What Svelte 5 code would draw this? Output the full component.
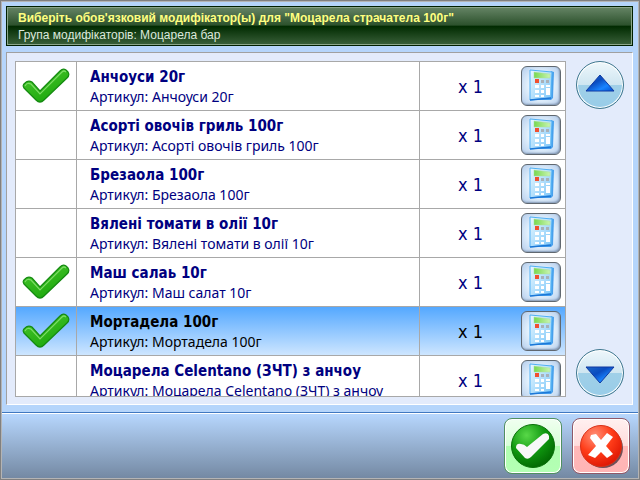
<script>
  let items = $state([
    { name: 'Анчоуси 20г', article: 'Анчоуси 20г', count: 1, checked: true },
    { name: 'Асорті овочів гриль 100г', article: 'Асорті овочів гриль 100г', count: 1, checked: false },
    { name: 'Брезаола 100г', article: 'Брезаола 100г', count: 1, checked: false },
    { name: 'Вялені томати в олії 10г', article: 'Вялені томати в олії 10г', count: 1, checked: false },
    { name: 'Маш салаь 10г', article: 'Маш салат 10г', count: 1, checked: true },
    { name: 'Мортадела 100г', article: 'Мортадела 100г', count: 1, checked: true },
    { name: 'Моцарела Celentano (ЗЧТ) з анчоу', article: 'Моцарела Celentano (ЗЧТ) з анчоу', count: 1, checked: false }
  ]);
  let selected = $state(5);
  let list;

  function pick(i) {
    selected = i;
    items[i].checked = !items[i].checked;
  }

  function scroll(rows) {
    list.scrollBy({ top: rows * 49 });
  }
</script>

<svg class="defs" aria-hidden="true">
  <defs>
    <linearGradient id="tick" x1="0" y1="0" x2="0.6" y2="1">
      <stop offset="0" stop-color="#4cc830" />
      <stop offset="1" stop-color="#1ca80c" />
    </linearGradient>
    <linearGradient id="arrow" x1="0" y1="0" x2="1" y2="1">
      <stop offset="0" stop-color="#1c68c8" />
      <stop offset="0.4" stop-color="#0a4cc0" />
      <stop offset="0.7" stop-color="#1884ff" />
      <stop offset="1" stop-color="#0050d0" />
    </linearGradient>
    <linearGradient id="calc" x1="0" y1="0" x2="1" y2="1">
      <stop offset="0" stop-color="#eaf8ff" />
      <stop offset="0.5" stop-color="#b4e0fc" />
      <stop offset="1" stop-color="#78c4f8" />
    </linearGradient>
    <linearGradient id="lcd" x1="0" y1="0" x2="1" y2="0">
      <stop offset="0" stop-color="#78d850" />
      <stop offset="1" stop-color="#c8f4b0" />
    </linearGradient>
    <radialGradient id="green" cx="0.35" cy="0.25" r="0.85">
      <stop offset="0" stop-color="#58d848" />
      <stop offset="0.5" stop-color="#109810" />
      <stop offset="1" stop-color="#006000" />
    </radialGradient>
    <radialGradient id="red" cx="0.35" cy="0.25" r="0.85">
      <stop offset="0" stop-color="#ff9078" />
      <stop offset="0.5" stop-color="#ff3c18" />
      <stop offset="1" stop-color="#d81000" />
    </radialGradient>
  </defs>
</svg>

<main class="window">
  <header>
    <h1>Виберіть обов'язковий модифікатор(ы) для "Моцарела страчатела 100г"</h1>
    <p>Група модифікаторів: Моцарела бар</p>
  </header>

  <section class="panel">
    <div class="list" bind:this={list}>
      <table>
        <tbody>
          {#each items as item, i}
            <tr class:selected={i === selected} onclick={() => pick(i)}>
              <td class="mark">
                {#if item.checked}
                  <svg width="48" height="36" viewBox="0 0 48 36" role="img" aria-label="Вибрано">
                    <path d="M2 20 Q0 17 3 15 Q6 12 10 14 L18 23 L38 3 Q41 0 44 2 L46 4 Q48 7 45 10 L22 32 Q18 36 14 32 Z" fill="url(#tick)" stroke="#148a10" stroke-width="1.2" />
                    <path d="M3 18 Q5 14 9 16 L18 26 L40 4 Q42 2 44 4" fill="none" stroke="#7cdc64" stroke-width="1.2" />
                  </svg>
                {/if}
              </td>
              <td class="info">
                <div class="name">{item.name}</div>
                <div class="article">Артикул: {item.article}</div>
              </td>
              <td class="amount">
                <div class="amount-row">
                  <span>x {item.count}</span>
                  <button class="calc" aria-label="Кількість" onclick={(e) => e.stopPropagation()}>
                    <svg width="38" height="38" viewBox="0 0 38 38">
                      <path d="M9 33 L29 33 L31 31 L32 5 L29 4 Z" fill="#48a0ec" />
                      <path d="M8 3 L30 5 L29 31 L8 33 Z" fill="url(#calc)" stroke="#50b0f4" />
                      <path d="M8 33 L29 31" stroke="#1c78d8" stroke-width="1.5" />
                      <path d="M12 5 L28 7 V11 H12 Z" fill="url(#lcd)" stroke="#a8dca0" stroke-width="0.5" />
                      <path d="M13 12 h4 v4 h-4z" fill="#f05030" />
                      <path d="M19 13 h3 v3 h-3z M24 13 h3 v3 h-3z" fill="#a8b0b8" />
                      <path d="M13 18 h4 v3 h-4z M19 18 h3 v3 h-3z M24 18 h4 v2 h-4z M13 23 h4 v3 h-4z M19 23 h3 v3 h-3z M24 21 h4 v7 h-4z M13 28 h4 v2 h-4z M19 28 h3 v2 h-3z" fill="#fff" />
                    </svg>
                  </button>
                </div>
              </td>
            </tr>
          {/each}
        </tbody>
      </table>
    </div>

    <div class="scroller">
      <button class="round" aria-label="Вгору" onclick={() => scroll(-1)}>
        <svg width="30" height="22" viewBox="0 0 30 22">
          <path d="M15 1 L29 17 H1 Z" fill="url(#arrow)" stroke="#1038a0" stroke-linejoin="round" />
        </svg>
      </button>
      <button class="round" aria-label="Вниз" onclick={() => scroll(1)}>
        <svg width="30" height="22" viewBox="0 0 30 22">
          <path d="M15 21 L29 5 H1 Z" fill="url(#arrow)" stroke="#1038a0" stroke-linejoin="round" />
        </svg>
      </button>
    </div>
  </section>

  <footer>
    <button class="action ok" aria-label="Підтвердити">
      <svg width="48" height="48" viewBox="0 0 48 48">
        <circle cx="24" cy="24" r="21.5" fill="url(#green)" stroke="#087008" />
        <path d="M7 26 Q7 21 12 22 Q15 22 18 25 L34 12 Q39 10 40 14 V17 L22 35 Q19 38 16 36 Z" fill="#f8f8f8" />
      </svg>
    </button>
    <button class="action cancel" aria-label="Скасувати">
      <svg width="48" height="48" viewBox="0 0 48 48">
        <circle cx="26" cy="26" r="20" fill="#705058" />
        <circle cx="24" cy="24" r="20.5" fill="url(#red)" stroke="#d83018" />
        <path d="M14 13 L19 12 L24 18 L30 11 L36 15 L29 24 L36 32 L30 36 L24 30 L18 36 L11 33 L19 24 L13 16 Z" fill="#fff" />
      </svg>
    </button>
  </footer>
</main>

<style>
  :global(body) {
    margin: 0;
  }

  .defs {
    position: absolute;
    width: 0;
    height: 0;
  }

  .window {
    box-sizing: border-box;
    height: 100vh;
    display: flex;
    flex-direction: column;
    border: 1px solid #808080;
    outline: 1px solid #b4b4b4;
    outline-offset: -2px;
    background: #b5d5fb;
    font-family: Tahoma, "DejaVu Sans Condensed", "Noto Sans", sans-serif;
    color: #000080;
  }

  button {
    padding: 0;
    cursor: pointer;
    display: flex;
    align-items: center;
    justify-content: center;
  }

  header {
    margin: 5px 6px 6px 5px;
    padding: 3px 11px 1px;
    border: 1px solid #002000;
    box-shadow: inset 0 0 0 1px #8ba68b;
    background: linear-gradient(#668566, #2c512c 48%, #002a00 50%, #3a603a);
    font-family: "Liberation Sans", Arial, sans-serif;
    font-size: 12px;
    line-height: 17px;
  }

  h1 {
    margin: 0;
    font-size: 12px;
    color: #ffff80;
  }

  p {
    margin: 0;
    color: #dce8dc;
  }

  .panel {
    flex: 1;
    min-height: 0;
    display: flex;
    gap: 10px;
    margin: 0 6px 7px 5px;
    padding: 8px 8px 7px;
    border: 1px solid;
    border-color: #a0a0a0 #fff #fff #a0a0a0;
    background: #e3ebfb;
  }

  .list {
    flex: 1;
    overflow: hidden;
    border: 1px solid #a8a8a8;
    background: #fff;
  }

  table {
    width: 100%;
    border-spacing: 0;
    table-layout: fixed;
  }

  td {
    box-sizing: border-box;
    height: 49px;
    padding: 0;
    border-bottom: 1px solid #a8a8a8;
  }

  td + td {
    border-left: 1px solid #a8a8a8;
  }

  .selected {
    background: linear-gradient(#54a8ff, #d0e7ff);
    color: #000;
  }

  .mark {
    width: 60px;
    text-align: center;
  }

  .mark svg {
    display: block;
    margin: auto;
  }

  .info {
    padding: 2px 0 0 13px;
    white-space: nowrap;
    overflow: hidden;
  }

  .name {
    font-size: 15px;
    font-weight: bold;
    line-height: 20px;
  }

  .article {
    font-family: Tahoma, "Noto Sans", sans-serif;
    font-size: 14px;
    line-height: 20px;
  }

  .amount {
    width: 146px;
  }

  .amount-row {
    display: flex;
    align-items: center;
    padding-right: 4px;
    font-size: 18px;
  }

  .amount-row span {
    flex: 1;
    text-align: center;
  }

  .calc {
    box-sizing: border-box;
    width: 40px;
    height: 40px;
    border: 1px solid #606870;
    border-radius: 6px;
    background: radial-gradient(#eaf6ff 40%, #b4cdec);
    box-shadow: inset -1px -1px 2px #8094b0;
  }

  .scroller {
    display: flex;
    flex-direction: column;
    justify-content: space-between;
  }

  .round {
    box-sizing: border-box;
    width: 48px;
    height: 48px;
    border: 1px solid #40788f;
    border-radius: 50%;
    background: linear-gradient(#eef7fb, #cfe6f1 49%, #a0d0e8 50%, #98cce8);
    box-shadow: inset 0 0 0 1px #fff;
  }

  footer {
    display: flex;
    justify-content: flex-end;
    gap: 10px;
    margin: 0 1px 1px;
    padding: 5px 8px 4px;
    border-top: 1px solid #4078c0;
    box-shadow: inset 0 1px #fff;
    background: linear-gradient(#b8d8ff, #7489a3);
  }

  .action {
    box-sizing: border-box;
    width: 58px;
    height: 56px;
    border: 1px solid;
    border-radius: 8px;
    box-shadow: inset 0 0 0 1px #fff;
  }

  .ok {
    border-color: #509060;
    background: linear-gradient(#f0fff0, #d8ffd8 49%, #b0ffb0 50%, #b4ffb4);
  }

  .cancel {
    border-color: #905868;
    background: linear-gradient(#fff0f0, #ffdcdc 49%, #ffb8b8 50%, #ffb4b4);
  }
</style>
